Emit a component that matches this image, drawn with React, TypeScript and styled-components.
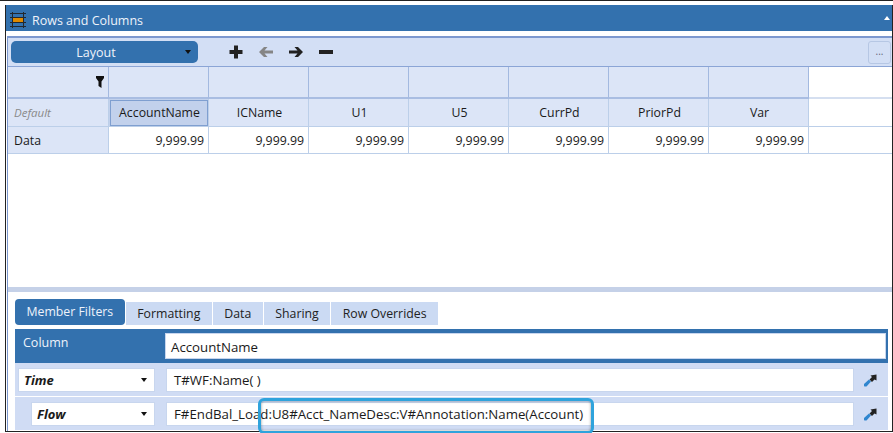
import styled, {createGlobalStyle} from "styled-components";

const GlobalStyle = createGlobalStyle`
  html, body {
    margin: 0;
    padding: 0;
    background: #fff;
    overflow: hidden;
  }
  body {
    font-family: "Open Sans", "Noto Sans", sans-serif;
    font-size: 12px;
    color: #1a1a1a;
  }
`

const blue = "#3371ae";
const paleBlue = "#d3dff5";
const cellBlue = "#dce5f7";
const gridLine = "#bccfe9";

const Page = styled.div`
  position: relative;
  width: 893px;
  height: 433px;
  box-sizing: border-box;
  border-top: 1px solid #222;
  padding: 4px 0 0 5px;
  overflow: hidden;
`

const Frame = styled.div`
  width: 888px;
  height: 427px;
  box-sizing: border-box;
  border-left: 1px solid #222;
  border-right: 1px solid #222;
  border-bottom: 1px solid #222;
  display: flex;
  flex-direction: column;
  overflow: hidden;
`

const TitleBar = styled.div`
  height: 26px;
  flex: none;
  box-sizing: border-box;
  background: ${blue};
  color: #eef3fb;
  display: flex;
  align-items: center;
  padding: 4px 2px 0 4px;
  font-size: 12.5px;
`

const TitleText = styled.span`
  margin-left: 6px;
  flex: 1;
`

const CollapseCaret = styled.span`
  margin: 0 0 5px;
  border-left: 3px solid transparent;
  border-right: 3px solid transparent;
  border-bottom: 4px solid #fff;
`

const Body = styled.div`
  flex: 1;
  margin-top: 5px;
  margin-left: 1px;
  border-left: 1px solid #7c98cf;
  border-top: 2px solid #7c98cf;
  display: flex;
  flex-direction: column;
  min-height: 0;
`

const Toolbar = styled.div`
  height: 29px;
  flex: none;
  box-sizing: border-box;
  background: ${paleBlue};
  border-bottom: 1px solid #8ba5d6;
  display: flex;
  align-items: center;
  padding: 0 1px 0 3px;
`

const LayoutButton = styled.div`
  width: 187px;
  height: 22px;
  border-radius: 5px;
  background: ${blue};
  color: #eef3fb;
  font-size: 12.5px;
  display: flex;
  align-items: center;
  justify-content: center;
  position: relative;
  padding-right: 17px;
  box-sizing: border-box;
`

const Caret = styled.span`
  position: absolute;
  right: 7px;
  top: 50%;
  margin-top: -2px;
  border-left: 3px solid transparent;
  border-right: 3px solid transparent;
  border-top: 4px solid #111;
`

const ToolIcons = styled.div`
  display: flex;
  align-items: center;
  gap: 14px;
  margin-left: 30px;
  flex: 1;
`

const MoreButton = styled.div`
  width: 23px;
  height: 23px;
  box-sizing: border-box;
  border: 1px solid #b6c7e4;
  border-radius: 3px;
  color: #667;
  font-size: 10px;
  display: flex;
  align-items: center;
  justify-content: center;
  line-height: 1;
  padding-bottom: 3px;
`

const Grid = styled.div`
  flex: none;
  display: grid;
  grid-template-columns: 101px repeat(7, 100px) 1fr;
  grid-template-rows: 32px 28px 27px;
  height: 220px;
  align-content: start;
  background: #fff;
`

type CellKind = "filter" | "header" | "row" | "value" | "selected" | "blank" | "blankTop"

const Cell = styled.div<{$kind: CellKind}>`
  box-sizing: border-box;
  display: flex;
  align-items: center;
  font-size: 12.3px;
  padding: 0 4px 0 6px;
  border-right: ${p => {
    if (p.$kind === "blank" || p.$kind === "blankTop") return "none";
    return `1px solid ${p.$kind === "filter" ? "#a3b9e0" : gridLine}`;
  }};
  border-bottom: ${p => {
    if (p.$kind === "filter") return "2px solid #a9bde2";
    if (p.$kind === "blankTop") return "2px solid #d5dff0";
    return `1px solid ${gridLine}`;
  }};
  background: ${p => {
    if (p.$kind === "filter" || p.$kind === "header" || p.$kind === "row") return cellBlue;
    if (p.$kind === "selected") return "#c2d1ec";
    return "#fff";
  }};
  justify-content: ${p => {
    if (p.$kind === "value" || p.$kind === "filter") return "flex-end";
    if (p.$kind === "header" || p.$kind === "selected") return "center";
    return "flex-start";
  }};
  ${p => p.$kind === "selected" && "outline: 1px solid #7f9fd0; outline-offset: -2px;"}
`

const DefaultLabel = styled.span`
  font-style: italic;
  color: #8a8a8a;
  font-size: 11.5px;
`

const Splitter = styled.div`
  height: 5px;
  flex: none;
  background: #c5d1e8;
`

const Lower = styled.div`
  flex: 1;
  padding: 7px 0 0 7px;
  min-height: 0;
  display: flex;
  flex-direction: column;
`

const Tabs = styled.div`
  display: flex;
  align-items: flex-end;
  gap: 1px;
  height: 26px;
  flex: none;
`

const Tab = styled.div<{$active?: boolean}>`
  height: ${p => p.$active ? "26px" : "23px"};
  box-sizing: border-box;
  padding: ${p => p.$active ? "0 11.5px 2px" : "0 11.5px"};
  display: flex;
  align-items: center;
  border-radius: ${p => p.$active ? "4px" : "0"};
  background: ${p => p.$active ? blue : "#cbdaf3"};
  color: ${p => p.$active ? "#eef3fb" : "#222"};
  font-size: 12.3px;
`

const ColumnRow = styled.div`
  margin-top: 4px;
  height: 34px;
  flex: none;
  background: ${blue};
  display: flex;
  align-items: flex-start;
  padding: 4px 2px 0 8px;
  box-sizing: border-box;
  width: 873px;
`

const ColumnLabel = styled.div`
  width: 142px;
  color: #eef3fb;
  font-size: 12.5px;
  line-height: 20px;
  flex: none;
`

const ColumnInput = styled.div`
  flex: 1;
  height: 26px;
  background: #fff;
  border: 1px solid #c8d6ee;
  box-sizing: border-box;
  display: flex;
  align-items: center;
  padding: 1px 5px 0;
  font-size: 13.25px;
`

const FilterRow = styled.div<{$indent?: boolean}>`
  height: 34px;
  width: 873px;
  flex: none;
  box-sizing: border-box;
  background: #d0dcf4;
  border-bottom: 1px solid #fff;
  display: flex;
  align-items: center;
  padding: 0 0 0 ${p => p.$indent ? "16px" : "3px"};
`

const Select = styled.div<{$indent?: boolean}>`
  width: ${p => p.$indent ? "124px" : "137px"};
  height: 24px;
  box-sizing: border-box;
  background: #fff;
  border: 1px solid #c8d6ee;
  display: flex;
  align-items: center;
  font-weight: 700;
  font-style: italic;
  font-size: 13px;
  padding: 1px 0 0 5px;
  position: relative;
  flex: none;
`

const TextField = styled.div`
  margin-left: 11px;
  width: 688px;
  height: 24px;
  box-sizing: border-box;
  background: #fff;
  border: 1px solid #c8d6ee;
  display: flex;
  align-items: center;
  padding: 1px 7px 0;
  font-size: 13.25px;
  flex: none;
`

const PickIcon = styled.div`
  margin-left: 9px;
  width: 14px;
  height: 14px;
  flex: none;
  display: flex;
`

const Highlight = styled.div`
  position: absolute;
  left: 258px;
  top: 397px;
  width: 336px;
  height: 36px;
  box-sizing: border-box;
  border: 3px solid #2fa3dc;
  border-radius: 6px;
  box-shadow: inset 0 0 3px rgba(60, 60, 60, 0.55);
`

const TableIcon = () => (
    <svg width="16" height="16" viewBox="0 0 16 16">
        <rect x="2" y="5" width="12" height="5" fill="#e08a00"/>
        <path d="M0 1.500H16M0 5.500H16M0 10.500H16M0 14.500H16M2.500 0V16M13.500 0V16" stroke="#23282e" strokeWidth="1" fill="none"/>
    </svg>
)

const PlusIcon = () => (
    <svg width="16" height="16" viewBox="0 0 16 16">
        <path d="M6 1.500H10V6H14.500V10H10V14.500H6V10H1.500V6H6Z" fill="#222"/>
    </svg>
)

const ArrowIcon = ({left, color}: { left?: boolean, color: string }) => (
    <svg width="16" height="16" viewBox="0 0 16 16" style={left ? {transform: "scaleX(-1)"} : undefined}>
        <path d="M1 6.500H9.500L6.500 3H10L15 8L10 13H6.500L9.500 9.500H1Z" fill={color}/>
    </svg>
)

const MinusIcon = () => (
    <svg width="16" height="16" viewBox="0 0 16 16">
        <rect x="1" y="6" width="14" height="4" fill="#222"/>
    </svg>
)

const FunnelIcon = () => (
    <svg width="8" height="12" viewBox="0 0 8 12">
        <path d="M0 0H8V2L5.500 5.500V12L2.500 10V5.500L0 2Z" fill="#111"/>
    </svg>
)

const PickerIcon = () => (
    <svg width="14" height="14" viewBox="0 0 14 14">
        <path d="M1 11L6 6.500L8 8.500L3.500 13.500H1.500L1 13Z" fill="#2f86cf"/>
        <path d="M7.500 2.500L13.500 1.500V7.500L11.500 6.500L9 9L6.500 6.500L9 4Z" fill="#222"/>
    </svg>
)

const columns = ["AccountName", "ICName", "U1", "U5", "CurrPd", "PriorPd", "Var"]

const App = () => {
    return (
        <Page>
            <GlobalStyle/>
            <Frame>
                <TitleBar>
                    <TableIcon/>
                    <TitleText>Rows and Columns</TitleText>
                    <CollapseCaret/>
                </TitleBar>
                <Body>
                    <Toolbar>
                        <LayoutButton>
                            Layout
                            <Caret/>
                        </LayoutButton>
                        <ToolIcons>
                            <PlusIcon/>
                            <ArrowIcon left color="#858585"/>
                            <ArrowIcon color="#222"/>
                            <MinusIcon/>
                        </ToolIcons>
                        <MoreButton>...</MoreButton>
                    </Toolbar>
                    <Grid>
                        <Cell $kind="filter"><FunnelIcon/></Cell>
                        {columns.map(c => <Cell key={c} $kind="filter"/>)}
                        <Cell $kind="blankTop"/>
                        <Cell $kind="row"><DefaultLabel>Default</DefaultLabel></Cell>
                        {columns.map((c, i) => <Cell key={c} $kind={i === 0 ? "selected" : "header"}>{c}</Cell>)}
                        <Cell $kind="blank"/>
                        <Cell $kind="row">Data</Cell>
                        {columns.map(c => <Cell key={c} $kind="value">9,999.99</Cell>)}
                        <Cell $kind="blank"/>
                    </Grid>
                    <Splitter/>
                    <Lower>
                        <Tabs>
                            <Tab $active>Member Filters</Tab>
                            <Tab>Formatting</Tab>
                            <Tab>Data</Tab>
                            <Tab>Sharing</Tab>
                            <Tab>Row Overrides</Tab>
                        </Tabs>
                        <ColumnRow>
                            <ColumnLabel>Column</ColumnLabel>
                            <ColumnInput>AccountName</ColumnInput>
                        </ColumnRow>
                        <FilterRow>
                            <Select>Time<Caret/></Select>
                            <TextField>T#WF:Name( )</TextField>
                            <PickIcon><PickerIcon/></PickIcon>
                        </FilterRow>
                        <FilterRow $indent>
                            <Select $indent>Flow<Caret/></Select>
                            <TextField>F#EndBal_Load:U8#Acct_NameDesc:V#Annotation:Name(Account)</TextField>
                            <PickIcon><PickerIcon/></PickIcon>
                        </FilterRow>
                    </Lower>
                </Body>
            </Frame>
            <Highlight/>
        </Page>
    )
}

export default App
